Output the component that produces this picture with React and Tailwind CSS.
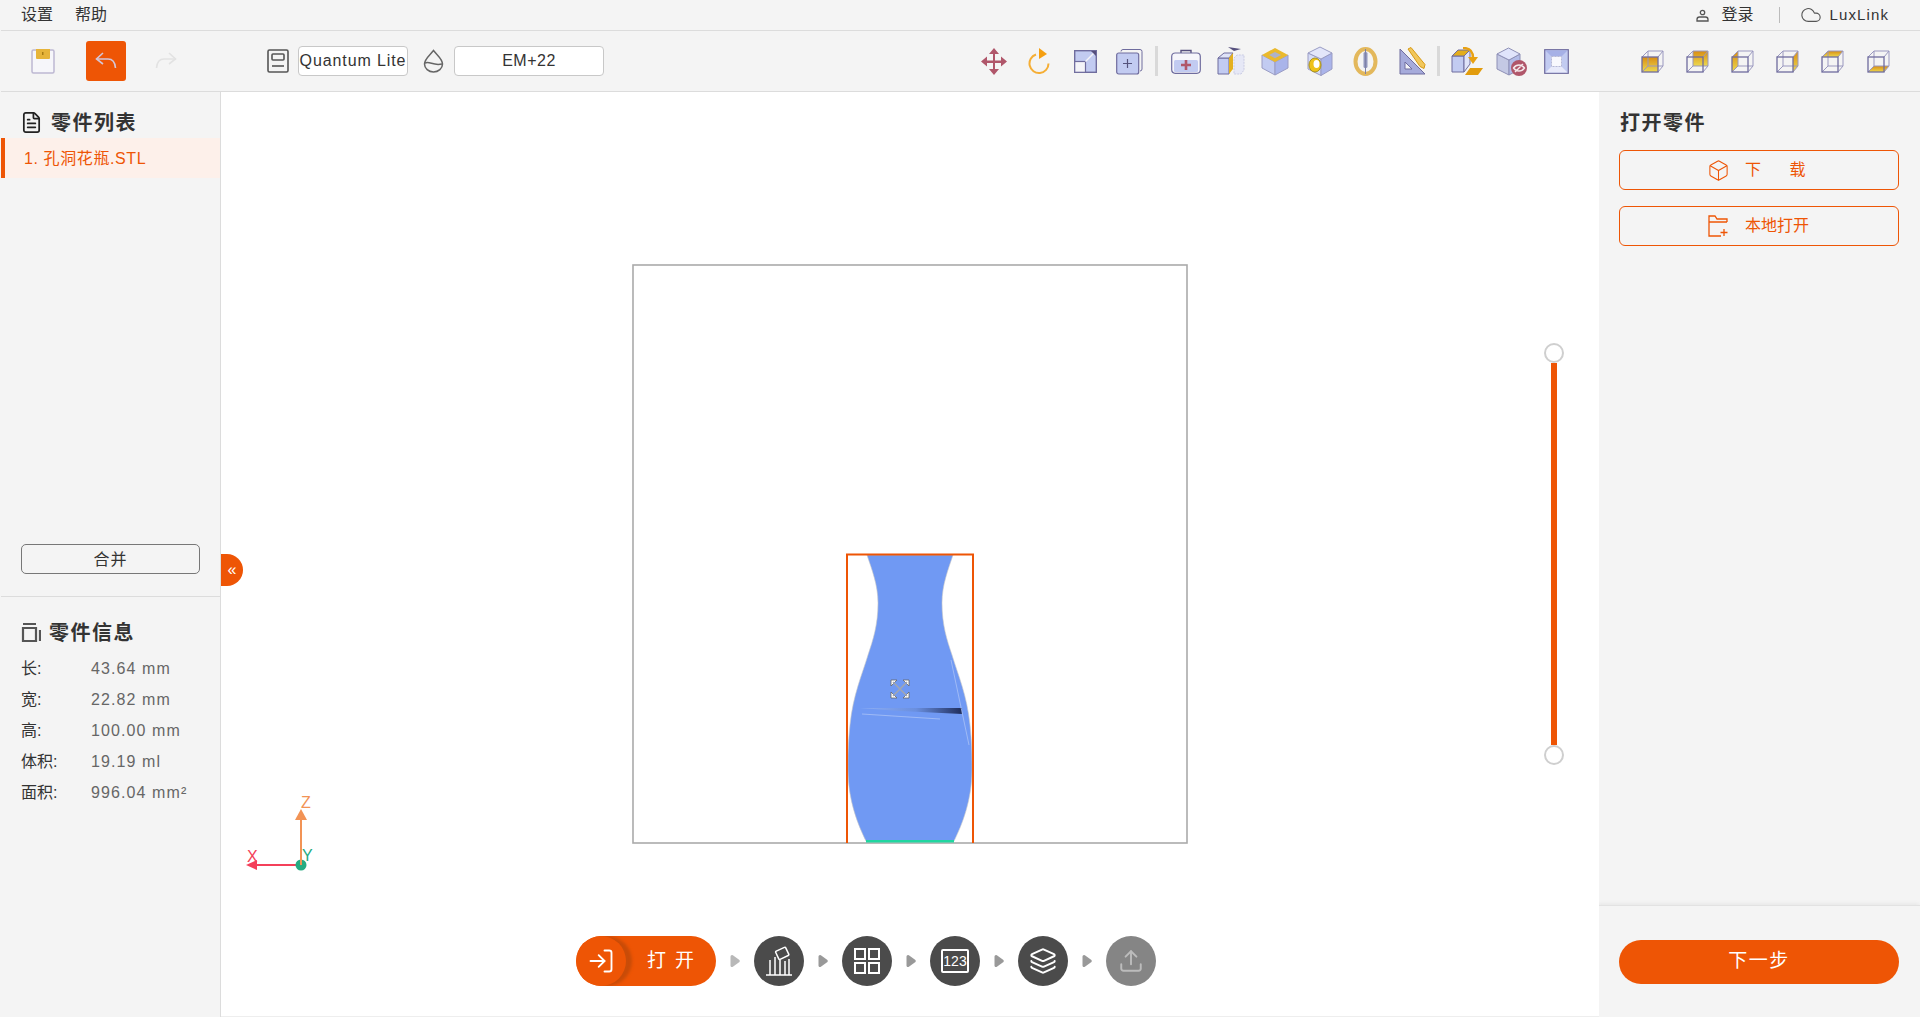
import React from 'react';
import { LogIn, Upload, Layers, Box, Cloud, FileText } from 'lucide-react';

const stroke = '#6f6c9e';
const blue = '#c2cbf1';
const rose = '#b0566a';

function SaveIcon() {
  return (
    <svg width="24" height="26" viewBox="0 0 24 26" className="shrink-0">
      <rect x="1" y="2" width="22" height="23" rx="1.5" fill="#f6f6fa" stroke="#bdb8d2" strokeWidth="1.5" />
      <path d="M5 1h14v9a1 1 0 0 1-1 1H6a1 1 0 0 1-1-1z" fill="#e6b43a" />
      <rect x="11" y="4" width="1.5" height="3" fill="#a87c14" />
    </svg>
  );
}

function ArrowBack({ color, flip }) {
  return (
    <svg width="22" height="20" viewBox="0 0 22 20" fill="none" stroke={color} strokeWidth="1.6" className={flip ? '-scale-x-100' : ''}>
      <path d="M8 2 1.5 8 8 13" />
      <path d="M1.5 8H13c4 0 7 3 7.5 9" />
    </svg>
  );
}

function MachineIcon() {
  return (
    <svg width="22" height="24" viewBox="0 0 22 24" fill="none" stroke="#555" strokeWidth="1.6" className="shrink-0">
      <rect x="1" y="1" width="20" height="22" rx="1.5" />
      <rect x="5" y="5" width="12" height="6" rx="1" />
      <path d="M5 17h12" />
    </svg>
  );
}

function DropIcon() {
  return (
    <svg width="21" height="24" viewBox="0 0 21 24" fill="none" stroke="#666" strokeWidth="1.5" className="shrink-0">
      <path d="M10.5 1.5C7 6 1.5 10 1.5 15a9 8 0 0 0 18 0c0-5-5.500-9-9-13.500z" />
      <path d="M2 14c5-2 8 3 17 1" />
    </svg>
  );
}

function MoveIcon() {
  return (
    <svg width="26" height="27" viewBox="0 0 26 27" fill={rose} className="shrink-0">
      <path d="M12 6h2v6.500h6V15h-6v6h-2v-6H6v-2.500h6z" />
      <path d="m13 0 5 6H8zM13 27l-5-6h10zM0 13.500 6 8.500v10zM26 13.500l-6-5v10z" />
    </svg>
  );
}

function RotateIcon() {
  return (
    <svg width="22" height="27" viewBox="0 0 22 27" fill="none" className="shrink-0">
      <path d="M8 6.500a9.500 9.500 0 1 0 12.500 9" stroke="#f5ae35" strokeWidth="2" />
      <path d="M11 0l8 6-8 5z" fill="#f59f12" />
    </svg>
  );
}

function ScaleIcon() {
  return (
    <svg width="23" height="23" viewBox="0 0 23 23" className="shrink-0">
      <rect x=".7" y=".7" width="21.600" height="21.600" fill={blue} stroke={stroke} strokeWidth="1.400" />
      <rect x=".7" y="11.500" width="10.800" height="10.800" fill="#f4f4f8" stroke={stroke} strokeWidth="1.200" />
      <path d="M11.500 11.500 21 2" stroke="#f4f4f8" strokeWidth="1.500" />
      <path d="M17 1h5v5z" fill="#56507e" />
    </svg>
  );
}

function CopyIcon() {
  return (
    <svg width="27" height="27" viewBox="0 0 27 27" fill="none" className="shrink-0">
      <path d="M5 3.500a2 2 0 0 1 2-2h17a2 2 0 0 1 2 2V21a2 2 0 0 1-2 2" stroke={stroke} />
      <rect x=".7" y="5" width="22" height="21" rx="2" fill={blue} stroke={stroke} strokeWidth="1.200" />
      <path d="M11.500 11v9M7 15.500h9" stroke="#55537c" strokeWidth="1.200" />
    </svg>
  );
}

function Sep({ ml }) {
  return <div className={`w-[3px] h-[30px] bg-[#d9d9d9] shrink-0 ${ml}`} />;
}

function MedicalIcon() {
  return (
    <svg width="30" height="25" viewBox="0 0 30 25" className="shrink-0">
      <path d="M10 4V1.500h10V4" fill="none" stroke="#56507e" strokeWidth="1.400" />
      <rect x=".7" y="4" width="28.600" height="20.300" rx="3.500" fill="#f6f6fb" stroke={stroke} strokeWidth="1.200" />
      <rect x="3" y="11" width="24" height="12" rx="1.500" fill={blue} />
      <path d="M15 11v10M10 16h10" stroke={rose} strokeWidth="2.600" />
    </svg>
  );
}

function SplitIcon() {
  return (
    <svg width="28" height="30" viewBox="0 0 28 30" className="shrink-0">
      <path d="M11 1l13 2-7 2z" fill="#56507e" />
      <path d="M1 12h11v16H1z" fill={blue} stroke={stroke} />
      <path d="M1 12l6-5h9l-4 5z" fill="#dfe3f8" stroke={stroke} />
      <path d="M12 12l4-5v16l-4 5z" fill="#e4b020" />
      <path d="M17 12l3-3h7v15l-3 4h-7z" fill="#e6e8f6" stroke="#c9cbe2" strokeDasharray="2 1" />
    </svg>
  );
}

function HollowIcon() {
  return (
    <svg width="28" height="29" viewBox="0 0 28 29" className="shrink-0">
      <path d="M1 8v13l13 7V15z" fill={blue} stroke="#9a9cc4" />
      <path d="M27 8v13l-13 7V15z" fill="#a9b4ea" stroke="#9a9cc4" />
      <path d="M14 1 27 8l-13 7L1 8z" fill="#eab92c" />
      <path d="M14 5l6 3-6 3.200L8 8z" fill="#aeb2c8" />
    </svg>
  );
}

function HoleIcon() {
  return (
    <svg width="26" height="30" viewBox="0 0 26 30" className="shrink-0">
      <path d="M1 7v16l13 6.500V13z" fill="#d6dcf6" stroke="#9a9cc4" />
      <path d="M25 7v16l-11 6.500V13z" fill="#aab4ea" stroke="#9a9cc4" />
      <path d="M13 1l12 6-11 6L1 7z" fill="#e3e6fa" stroke="#9a9cc4" />
      <ellipse cx="8" cy="19" rx="6" ry="7" fill="#eec21a" stroke="#a9931e" />
      <ellipse cx="9.500" cy="18" rx="3" ry="4" fill="#fff" />
    </svg>
  );
}

function RingIcon() {
  return (
    <svg width="25" height="29" viewBox="0 0 25 29" fill="none" className="shrink-0">
      <ellipse cx="12.500" cy="14.500" rx="10" ry="12.500" stroke="#e3b85c" strokeWidth="4" />
      <rect x="10.500" y="5" width="4" height="16" rx="1.500" fill="#9297bd" />
      <path d="M12.500 2v25" stroke="#7e82a8" strokeWidth="1" />
    </svg>
  );
}

function RulerIcon() {
  return (
    <svg width="27" height="28" viewBox="0 0 27 28" className="shrink-0">
      <path d="M1 2v25h25z" fill="#a6abdb" stroke={stroke} />
      <path d="M6 15v7h7z" fill="#f4f4f8" stroke={stroke} />
      <path d="M9 2l3-1.500 14 17-1 4-4-2z" fill="#f1c75c" stroke="#d89a14" />
    </svg>
  );
}

function TransferIcon() {
  return (
    <svg width="32" height="28" viewBox="0 0 32 28" className="shrink-0">
      <path d="M1 9h12v16H1z" fill={blue} stroke={stroke} />
      <path d="M1 9l6-6h12l-6 6z" fill="#e3ad1c" stroke={stroke} />
      <path d="M13 9l6-6v14l-6 8z" fill="#dfe3f8" stroke={stroke} />
      <path d="M12 1c7 0 10 3 10 10" fill="none" stroke="#e8a112" strokeWidth="2.500" />
      <path d="M17 10h10l-5 7z" fill="#e8a112" />
      <path d="M19 21h13l-5 7H14z" fill="#e29c0d" />
    </svg>
  );
}

function HideIcon() {
  return (
    <svg width="31" height="29" viewBox="0 0 31 29" className="shrink-0">
      <path d="M1 7v15l12 6V13z" fill="#c4c9e4" stroke="#8e90b6" />
      <path d="M24 7v15l-11 6V13z" fill="#b2bbe8" stroke="#8e90b6" />
      <path d="M12.500 1 24 7l-11 6L1 7z" fill="#e0e4fb" stroke="#8e90b6" />
      <circle cx="23" cy="21" r="8" fill={rose} />
      <path d="M17.500 21c3-4 8-4 11 0-3 4-8 4-11 0zM19 25l8-8" fill="none" stroke="#f4e9ec" strokeWidth="1.400" />
    </svg>
  );
}

function FrameIcon() {
  return (
    <svg width="25" height="25" viewBox="0 0 25 25" className="shrink-0">
      <rect x=".7" y=".7" width="23.600" height="23.600" fill={blue} stroke={stroke} strokeWidth="1.200" />
      <path d="M1.500 1.500l6 6h10l6-6z" fill="#a6b0e6" />
      <path d="M1.500 23.500l6-6h10l6 6z" fill="#e8eafa" />
      <rect x="7.500" y="7.500" width="10" height="10" fill="#f8f8fd" stroke="#b6b8d4" strokeDasharray="2 1" />
    </svg>
  );
}

const cubeFaces = {
  front: '1,7 17,7 17,22 1,22',
  back: '7,1 22,1 22,16 7,16',
  left: '1,7 7,1 7,16 1,22',
  right: '17,7 22,1 22,16 17,22',
  top: '1,7 7,1 22,1 17,7',
  bottom: '1,22 7,16 22,16 17,22',
};

function ViewCube({ face, ml }) {
  return (
    <svg width="23" height="23" viewBox="0 0 23 23" fill="none" className={`shrink-0 ${ml}`}>
      <defs>
        <linearGradient id={`cube-${face}`} x1="0" y1="0" x2="0" y2="1">
          <stop offset="0" stopColor="#d98d12" />
          <stop offset="1" stopColor="#ecd950" />
        </linearGradient>
      </defs>
      <polygon points={cubeFaces[face]} fill={`url(#cube-${face})`} />
      <path d="M7 1h15v15H7zM1 7l6-6M17 7l5-6M1 22l6-6M17 22l5-6" stroke="#9a98bf" />
      <rect x="1" y="7" width="16" height="15" stroke={stroke} strokeWidth="1.300" />
    </svg>
  );
}

function Toolbar() {
  return (
    <div className="h-[61px] flex items-center border-b border-[#dcdcdc] pl-[30px] shrink-0">
      <SaveIcon />
      <button className="ml-[31px] w-10 h-10 rounded-[3px] bg-[#ee5505] flex items-center justify-center shrink-0">
        <ArrowBack color="#d3c6d8" />
      </button>
      <div className="ml-[29px] shrink-0"><ArrowBack color="#e2e2e2" flip /></div>
      <div className="ml-[90px] shrink-0"><MachineIcon /></div>
      <div className="ml-[9px] w-[110px] h-[30px] rounded-[4px] border border-[#c8c8c8] bg-white flex items-center justify-center text-[16px] text-[#333] tracking-[0.9px] shrink-0">Quantum Lite</div>
      <div className="ml-[15px]"><DropIcon /></div>
      <div className="ml-[10px] w-[150px] h-[30px] rounded-[4px] border border-[#c8c8c8] bg-white flex items-center justify-center text-[16px] text-[#333] tracking-[0.5px] shrink-0">EM+22</div>
      <div className="ml-[377px] flex items-center">
        <MoveIcon />
        <div className="ml-[21px]"><RotateIcon /></div>
        <div className="ml-[24px]"><ScaleIcon /></div>
        <div className="ml-[19px]"><CopyIcon /></div>
        <Sep ml="ml-[12px]" />
        <div className="ml-[13px]"><MedicalIcon /></div>
        <div className="ml-[16px]"><SplitIcon /></div>
        <div className="ml-[16px]"><HollowIcon /></div>
        <div className="ml-[18px]"><HoleIcon /></div>
        <div className="ml-[20px]"><RingIcon /></div>
        <div className="ml-[21px]"><RulerIcon /></div>
        <Sep ml="ml-[11px]" />
        <div className="ml-[11px]"><TransferIcon /></div>
        <div className="ml-[13px]"><HideIcon /></div>
        <div className="ml-[17px]"><FrameIcon /></div>
        <ViewCube face="front" ml="ml-[72px]" />
        <ViewCube face="back" ml="ml-[22px]" />
        <ViewCube face="left" ml="ml-[22px]" />
        <ViewCube face="right" ml="ml-[22px]" />
        <ViewCube face="top" ml="ml-[22px]" />
        <ViewCube face="bottom" ml="ml-[23px]" />
      </div>
    </div>
  );
}

const partInfo = [
  ['长:', '43.64 mm'],
  ['宽:', '22.82 mm'],
  ['高:', '100.00 mm'],
  ['体积:', '19.19 ml'],
  ['面积:', '996.04 mm²'],
];

function LeftPanel() {
  return (
    <aside className="w-[220px] shrink-0 border-r border-[#dcdcdc] flex flex-col relative">
      <div className="h-[46px] flex items-center pt-[15px] pl-5 gap-2 text-[20px] font-bold text-[#333] tracking-[1.5px]">
        <FileText size={23} strokeWidth={1.800} className="text-[#222] -ml-[1px]" />
        <span>零件列表</span>
      </div>
      <div className="h-10 border-l-4 border-[#ee5505] bg-[#fdf0ea] flex items-center pt-[1px] pl-[19px] text-[16px] text-[#ee5505] tracking-[0.6px]">1. 孔洞花瓶.STL</div>
      <div className="flex-1" />
      <div className="px-5 pb-[22px]">
        <button className="w-[179px] h-[30px] rounded-[5px] border border-[#777] pt-[1px] text-[16px] text-[#333] tracking-[1px]">合并</button>
      </div>
      <div className="h-[421px] border-t border-[#dcdcdc] px-5 pt-[24px]">
        <div className="flex items-center gap-2 text-[20px] font-bold text-[#333] tracking-[1.5px] h-6">
          <svg width="20" height="20" viewBox="0 0 20 20" fill="none" stroke="#555" strokeWidth="2.200">
            <path d="M2 1h13M2 5h13v13H2zM19 7v11" />
          </svg>
          <span>零件信息</span>
        </div>
        <div className="mt-[8px]">
          {partInfo.map(([label, value]) => (
            <div key={label} className="h-[31px] flex items-center">
              <span className="w-[70px] text-[#333] text-[16px]">{label}</span>
              <span className="text-[#666] text-[16px] tracking-[1.1px]">{value}</span>
            </div>
          ))}
        </div>
      </div>
      <button className="absolute left-[220px] top-[462px] w-[22px] h-[32px] rounded-r-[16px] bg-[#ee5505] text-white text-[16px] leading-none flex items-center justify-center z-10">«</button>
    </aside>
  );
}

function Scene() {
  return (
    <svg width="556" height="580" viewBox="632 264 556 580" className="block ml-[411px] mt-[172px]">
      <rect x="633" y="265" width="554" height="578" fill="#fff" stroke="#aaa" strokeWidth="1.600" />
      <path
        d="M867 555C872 570 878 585 878 603C878 625 873 640 868 655C862 675 853 695 850 725C848 745 848 755 848 770C848 800 858 825 866 841H954C962 825 972 800 972 770C972 755 972 745 970 725C967 695 958 675 952 655C947 640 942 625 942 603C942 585 948 570 953 555Z"
        fill="#7099f3"
        stroke="#c8c8c8"
        strokeWidth=".6"
      />
      <defs>
        <linearGradient id="vase-shade" x1="0" y1="0" x2="1" y2="0">
          <stop offset="0" stopColor="#8fb0f5" />
          <stop offset=".55" stopColor="#6a8fdf" />
          <stop offset="1" stopColor="#1f2d5c" />
        </linearGradient>
      </defs>
      <path d="M860 708 962 708V714L900 711Z" fill="url(#vase-shade)" />
      <path d="M862 714 940 719M951 660 969 745" stroke="#a9c2f6" strokeWidth=".8" fill="none" />
      <rect x="866" y="840" width="88" height="2.500" fill="#21d6a0" />
      <path d="M847 843V554.500H973V843" fill="none" stroke="#ee5505" strokeWidth="2" />
      <g>
        <rect x="890" y="679" width="20" height="20" fill="#7099f3" />
        <path d="M891 680h6l-6 6zM909 680h-6l6 6zM891 698h6l-6-6zM909 698h-6l6-6z" fill="#fff" stroke="#666" strokeWidth=".8" />
        <path d="M893 682 907 696M907 682 893 696" stroke="#a0a6b2" strokeWidth="1.600" />
      </g>
    </svg>
  );
}

function Gizmo() {
  return (
    <svg width="80" height="86" viewBox="0 0 80 86" className="absolute left-[19px] top-[697px]" style={{ fontFamily: 'Liberation Sans, sans-serif', fontSize: 16 }}>
      <text x="61" y="19" fill="#f29355">Z</text>
      <text x="7" y="73" fill="#f4405a">X</text>
      <text x="62" y="72" fill="#25ab82">Y</text>
      <path d="M61 76H15" stroke="#f4405a" strokeWidth="2" />
      <path d="M6 76l11-5v10z" fill="#f4405a" />
      <path d="M61 76V28" stroke="#f29355" strokeWidth="2" />
      <path d="M61 20l6 11H55z" fill="#f29355" />
      <circle cx="61" cy="76" r="5.500" fill="#25ab82" />
      <path d="M61 76V70" stroke="#f29355" strokeWidth="2" />
    </svg>
  );
}

function Thumb() {
  return <div className="w-5 h-5 rounded-full border-2 border-[#cfcfcf] bg-white" />;
}

function HeightSlider() {
  return (
    <div className="absolute left-[1323px] top-[251px] flex flex-col items-center">
      <Thumb />
      <div className="w-1.5 h-[382px] bg-[#ee5505]" />
      <Thumb />
    </div>
  );
}

function StepCircle({ children, faded }) {
  return (
    <div className={`w-[50px] h-[50px] rounded-full flex items-center justify-center shrink-0 ${faded ? 'bg-[#858585]' : 'bg-[#4b4b4b]'}`}>
      {children}
    </div>
  );
}

function StepArrow({ light }) {
  const color = light ? '#b8b8b8' : '#999';
  return (
    <svg width="10" height="14" viewBox="0 0 10 14" className="mx-[14px] shrink-0">
      <path d="M2 2.500 8.200 7 2 11.500z" fill={color} stroke={color} strokeWidth="3" strokeLinejoin="round" />
    </svg>
  );
}

function StepBar() {
  return (
    <div className="flex items-center ml-[355px] mt-[92px]">
      <button className="relative w-[140px] h-[50px] rounded-full bg-[#ee5505] flex items-center shrink-0 overflow-hidden">
        <span className="w-[50px] h-[50px] rounded-full bg-[#ee5505] shadow-[6px_0_3px_#c94c08] flex items-center justify-center shrink-0">
          <LogIn size={28} strokeWidth={1.600} className="text-white" />
        </span>
        <span className="ml-[21px] text-[19px] text-white tracking-[9px]">打开</span>
      </button>
      <StepArrow light />
      <StepCircle>
        <svg width="28" height="30" viewBox="0 0 28 30" fill="none" stroke="#fff" strokeWidth="1.500">
          <path d="M1 29h26M5 29V14M10 29V11M15 29V14M20 29V15M24 29V13" />
          <rect x="12" y="3" width="11" height="9" rx="1" transform="rotate(-25 17 8)" fill="#4b4b4b" />
        </svg>
      </StepCircle>
      <StepArrow />
      <StepCircle>
        <svg width="26" height="26" viewBox="0 0 26 26" fill="none" stroke="#fff" strokeWidth="2">
          <rect x="1" y="1" width="10" height="10" />
          <rect x="15" y="1" width="10" height="10" />
          <rect x="1" y="15" width="10" height="10" />
          <rect x="15" y="15" width="10" height="10" />
        </svg>
      </StepCircle>
      <StepArrow />
      <StepCircle>
        <div className="w-[28px] h-[24px] border-2 border-white rounded-[2px] flex items-center justify-center text-[14px] text-white leading-none">123</div>
      </StepCircle>
      <StepArrow />
      <StepCircle><Layers size={28} strokeWidth={1.700} className="text-white" /></StepCircle>
      <StepArrow />
      <StepCircle faded><Upload size={26} strokeWidth={1.800} className="text-[#bcbcbc]" /></StepCircle>
    </div>
  );
}

function RightPanel() {
  return (
    <aside className="w-[321px] shrink-0 bg-[#f4f4f4] flex flex-col">
      <div className="h-[46px] flex items-center pt-[15px] pl-[21px] text-[20px] font-bold text-[#333] tracking-[1.5px]">打开零件</div>
      <div className="px-5 pt-[12px] flex flex-col gap-4">
        <button className="w-[280px] h-10 rounded-[6px] border border-[#ee5505] text-[#ee5505] text-[16px] flex items-center justify-start pl-[87px] gap-[15px]">
          <Box size={23} strokeWidth={1.100} />
          <span className="whitespace-pre tracking-[12px]">下 载</span>
        </button>
        <button className="w-[280px] h-10 rounded-[6px] border border-[#ee5505] text-[#ee5505] text-[16px] flex items-center justify-start pl-[88px] gap-[17px]">
          <svg width="20" height="22" viewBox="0 0 20 22" fill="none" stroke="#ee5505" strokeWidth="1.300">
            <path d="M19 7V4H9L7 1H1v20h12" />
            <path d="M1 7h18M16 14v7M12.500 17.500h7" />
          </svg>
          <span>本地打开</span>
        </button>
      </div>
      <div className="flex-1" />
      <div className="h-[112px] border-t border-[#e2e2e2] shadow-[-1px_-1px_4px_#e4e4e4] flex items-center px-5">
        <button className="w-[280px] h-11 rounded-full bg-[#ee5505] text-white text-[19px] tracking-[1.5px]">下一步</button>
      </div>
    </aside>
  );
}

export default function App() {
  return (
    <div
      className="h-[1017px] w-[1920px] overflow-hidden pl-px flex flex-col bg-[#f4f4f4] text-[#333]"
      style={{ fontFamily: '"Liberation Sans", "Noto Sans CJK SC", sans-serif' }}
    >
      <div className="h-[31px] border-b border-[#dcdcdc] flex items-center pl-5 text-[16px] text-[#333] shrink-0">
        <span>设置</span>
        <span className="ml-[22px]">帮助</span>
        <div className="ml-auto flex items-center pr-[31px]">
          <svg width="13" height="13" viewBox="0 0 13 13" fill="none" stroke="#555" strokeWidth="1.300">
            <circle cx="6.500" cy="3.500" r="2.200" />
            <path d="M1 12v-1.500C1 9 2 8 3.500 8h6C11 8 12 9 12 10.500V12z" />
          </svg>
          <span className="ml-[13px]">登录</span>
          <div className="ml-[25px] w-px h-[16px] bg-[#bbb]" />
          <Cloud size={22} strokeWidth={1.200} className="ml-[20px] text-[#555]" />
          <span className="ml-[8px] text-[15px] tracking-[1.1px]">LuxLink</span>
        </div>
      </div>
      <Toolbar />
      <div className="flex flex-1 min-h-0">
        <LeftPanel />
        <main className="flex-1 relative bg-white border-b border-[#eee]">
          <Scene />
          <StepBar />
          <Gizmo />
          <HeightSlider />
        </main>
        <RightPanel />
      </div>
    </div>
  );
}
